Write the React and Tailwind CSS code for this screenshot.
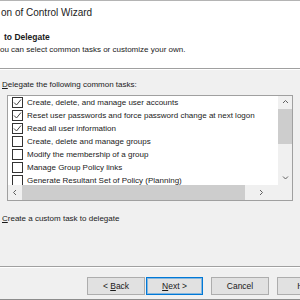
import React from "react";

const tasks = [
  { label: "Create, delete, and manage user accounts", checked: true },
  { label: "Reset user passwords and force password change at next logon", checked: true },
  { label: "Read all user information", checked: true },
  { label: "Create, delete and manage groups", checked: false },
  { label: "Modify the membership of a group", checked: false },
  { label: "Manage Group Policy links", checked: false },
  { label: "Generate Resultant Set of Policy (Planning)", checked: false },
];

function CheckBox({ checked }) {
  return (
    <div className="w-[11px] h-[11px] border border-[#333] bg-white flex items-center justify-center shrink-0">
      {checked && (
        <svg width="9" height="9" viewBox="0 0 9 9">
          <path d="M1 4.5 L3.5 7 L8 1.5" fill="none" stroke="#444" strokeWidth="1" />
        </svg>
      )}
    </div>
  );
}

function Chevron({ dir }) {
  const d = {
    up: "M1 4 L3.5 1.5 L6 4",
    down: "M1 1.5 L3.5 4 L6 1.5",
    left: "M4 1 L1.5 3.5 L4 6",
    right: "M2 1 L4.5 3.5 L2 6",
  }[dir];
  return (
    <svg width="7" height="7" viewBox="0 0 7 7">
      <path d={d} fill="none" stroke="#606060" strokeWidth="1" />
    </svg>
  );
}

export default function App() {
  return (
    <div className="w-[300px] h-[300px] overflow-hidden bg-[#f0f0f0] flex flex-col font-['Liberation_Sans',Arial,sans-serif] text-[#1a1a1a]">
      {/* Title + header */}
      <div className="h-[69px] bg-white border-t border-[#b4b4b4] border-b border-b-[#a0a0a0] flex flex-col shrink-0">
        <div className="pt-[6px] pl-[1px] text-[10px] leading-[12px] text-[#222]">on of Control Wizard</div>
        <div className="mt-[12px] pl-[4px] text-[8.5px] leading-[12px] font-bold">to Delegate</div>
        <div className="mt-[1px] text-[8px] leading-[12px]">ou can select common tasks or customize your own.</div>
      </div>

      {/* Body */}
      <div className="flex-1 flex flex-col border-t border-white">
        <div className="mt-[9px] pl-[2px] text-[8px] leading-[12px]">
          <span className="underline">D</span>elegate the following common tasks:
        </div>

        <div className="mt-[4px] ml-[7px] w-[286px] h-[106px] border border-[#a0a0a0] bg-white flex flex-col">
          <div className="flex h-[89px]">
            <div className="flex-1 overflow-hidden flex flex-col">
              {tasks.map((t) => (
                <div key={t.label} className="h-[13px] shrink-0 flex items-center pl-[4px] gap-[4px] text-[8px] whitespace-nowrap">
                  <CheckBox checked={t.checked} />
                  <span>{t.label}</span>
                </div>
              ))}
            </div>
            <div className="w-[14px] bg-[#f0f0f0] flex flex-col items-center">
              <div className="h-[13px] flex items-center justify-center">
                <Chevron dir="up" />
              </div>
              <div className="w-full h-[35px] bg-[#cdcdcd]" />
              <div className="flex-1" />
              <div className="h-[13px] flex items-center justify-center">
                <Chevron dir="down" />
              </div>
            </div>
          </div>
          <div className="flex h-[15px] bg-[#f0f0f0] items-center">
            <div className="w-[14px] flex items-center justify-center">
              <Chevron dir="left" />
            </div>
            <div className="w-[223px] h-full bg-[#cdcdcd]" />
            <div className="w-[32px] flex items-center justify-center">
              <Chevron dir="right" />
            </div>
          </div>
        </div>

        <div className="mt-[12px] pl-[2px] text-[8px] leading-[12px]">
          <span className="underline">C</span>reate a custom task to delegate
        </div>

        <div className="mt-[41px] border-t border-[#a0a0a0] border-b border-b-white" />

        <div className="mt-[9px] flex pl-[87px] text-[8.5px]">
          <button className="shrink-0 w-[58px] h-[18px] bg-[#e1e1e1] border border-[#adadad]">
            &lt; <span className="underline">B</span>ack
          </button>
          <button className="shrink-0 ml-[1px] w-[57px] h-[18px] bg-[#e1e1e1] border border-[#0078d7] outline outline-1 outline-offset-[-2px] outline-[#0078d7]/40">
            <span className="underline">N</span>ext &gt;
          </button>
          <button className="shrink-0 ml-[8px] w-[58px] h-[18px] bg-[#e1e1e1] border border-[#adadad]">Cancel</button>
          <button className="shrink-0 ml-[8px] w-[58px] h-[18px] bg-[#e1e1e1] border border-[#adadad]">Help</button>
        </div>

        <div className="mt-auto h-[1px] bg-[#8c8c8c]" />
      </div>
    </div>
  );
}
